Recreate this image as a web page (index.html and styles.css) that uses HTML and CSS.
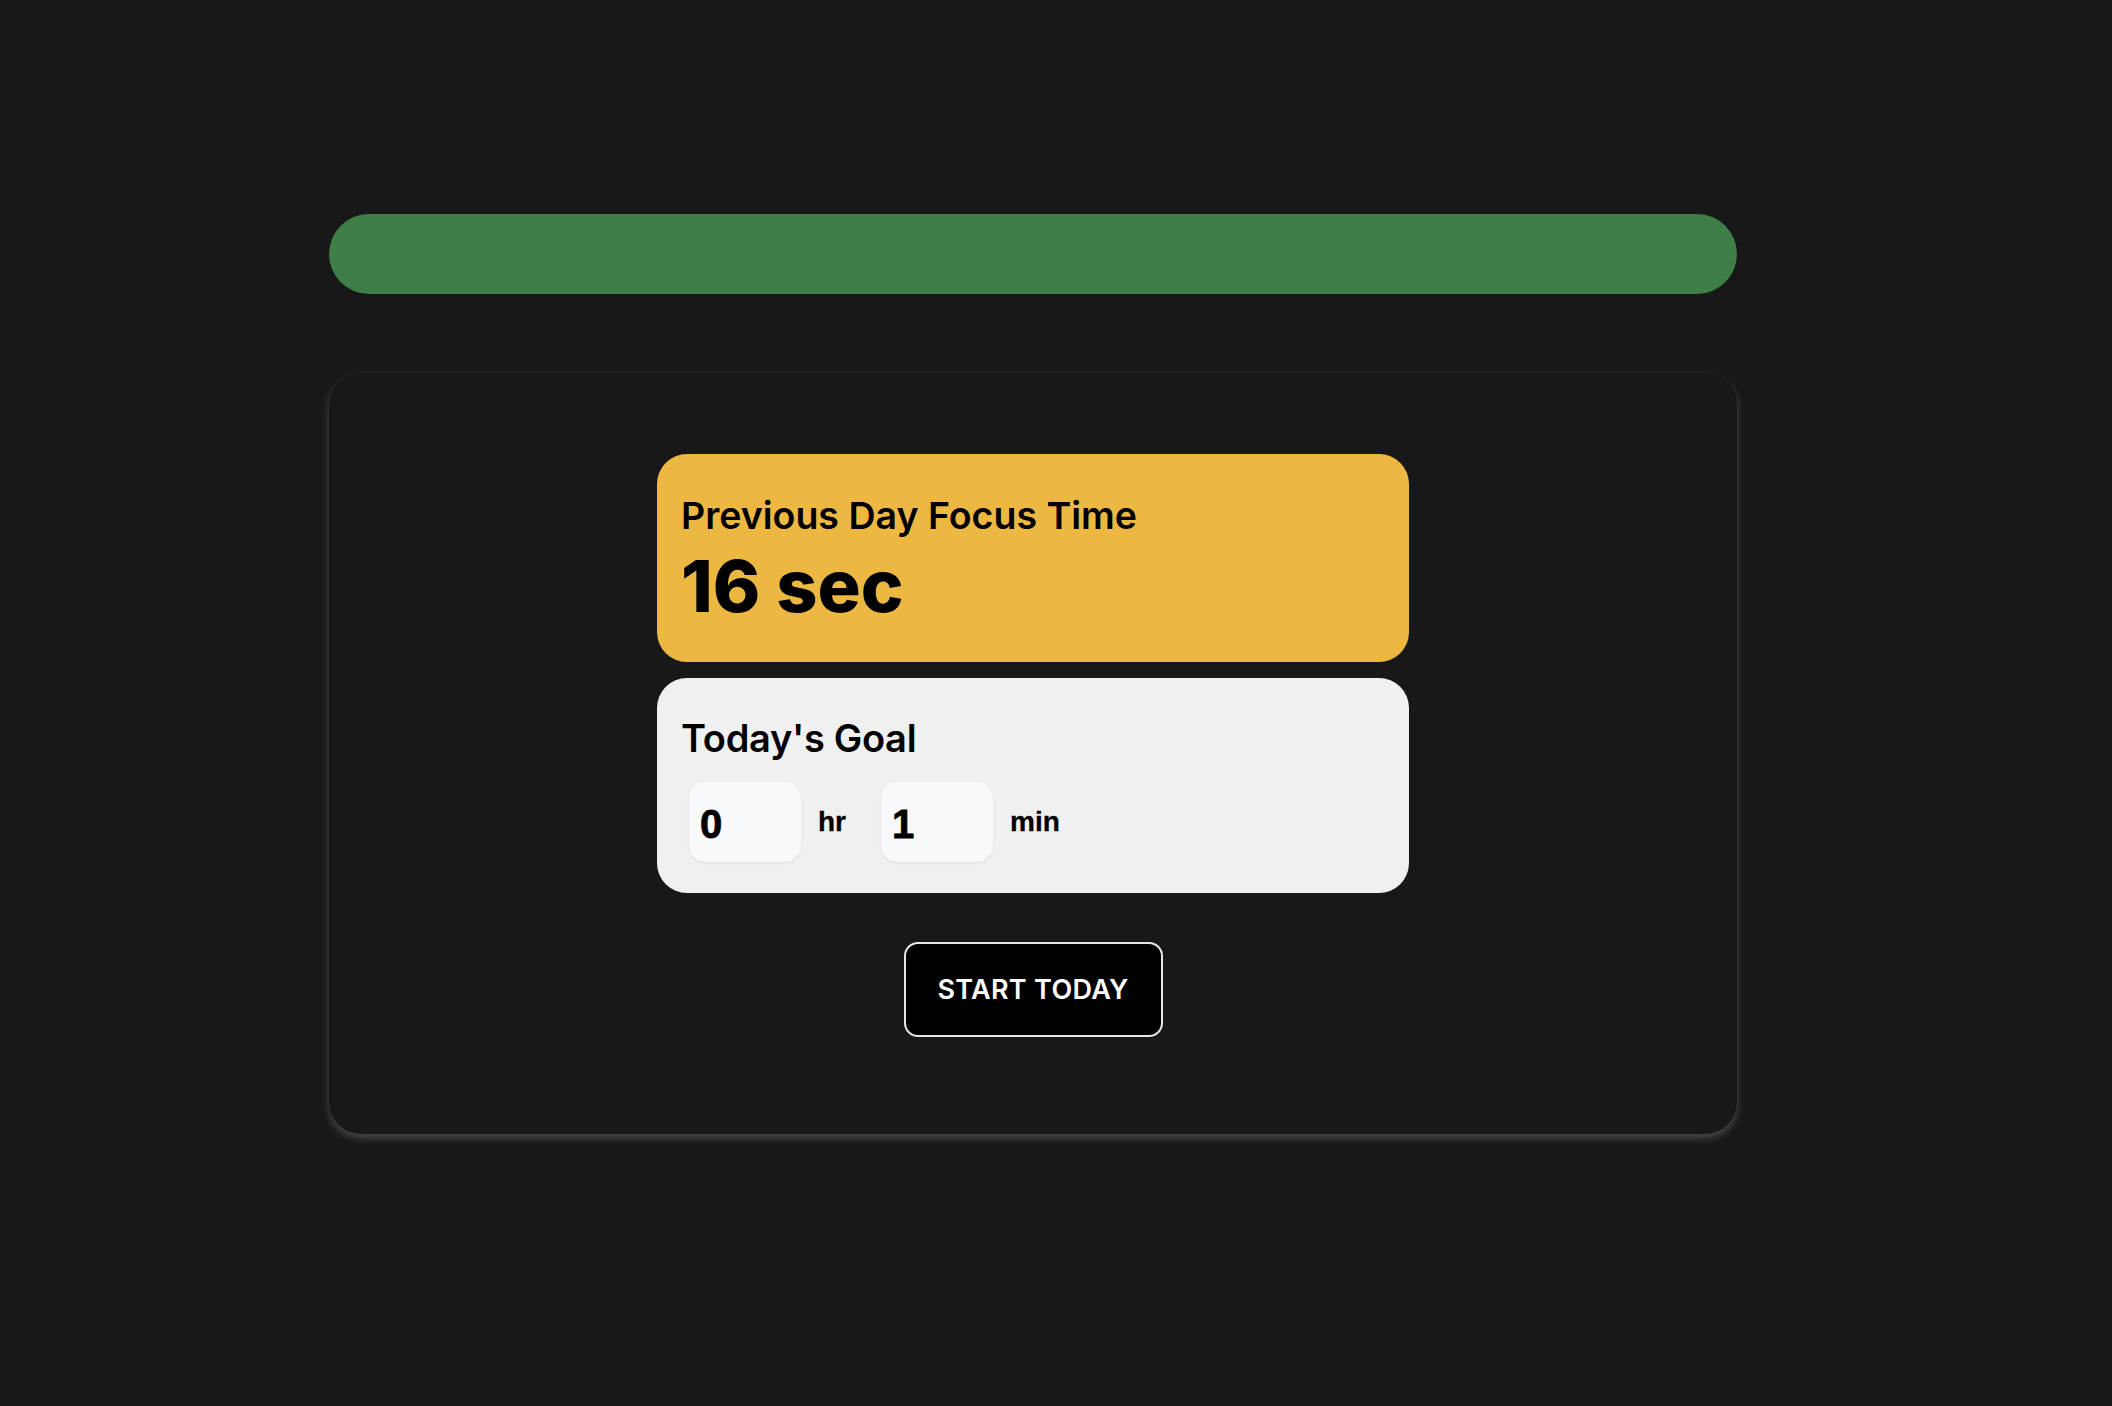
FILE: index.html
```html
<!DOCTYPE html>
<html lang="en">
<head>
<meta charset="utf-8">
<title>Focus</title>
<link rel="stylesheet" href="styles.css">
</head>
<body>
<main class="page">
  <div class="progress"></div>
  <section class="panel">
    <div class="stat-card">
      <h2 class="stat-title">Previous Day Focus Time</h2>
      <p class="stat-value">16 sec</p>
    </div>
    <div class="goal-card">
      <h2 class="goal-title">Today's Goal</h2>
      <div class="goal-row">
        <input class="goal-input" type="text" value="0">
        <span class="goal-unit unit-hr">hr</span>
        <input class="goal-input" type="text" value="1">
        <span class="goal-unit">min</span>
      </div>
    </div>
    <button class="start-btn" type="button">START TODAY</button>
  </section>
</main>
</body>
</html>
```
FILE: styles.css
```css
* { box-sizing: border-box; }
html, body { margin: 0; padding: 0; }
body {
  background: #181818;
  font-family: "Inter", "Noto Sans", sans-serif;
  min-height: 1406px;
}
.page {
  width: 1408px;
  margin-left: 329px;
  padding-top: 214px;
  display: flex;
  flex-direction: column;
}
.progress {
  height: 80px;
  border-radius: 40px;
  background: #3d7f46;
}
.panel {
  margin-top: 79px;
  height: 761px;
  border-radius: 32px;
  background: #181818;
  box-shadow: 0 4px 8px rgba(255, 255, 255, 0.22);
  display: flex;
  flex-direction: column;
  align-items: center;
  padding-top: 81px;
}
.stat-card {
  width: 752px;
  height: 208px;
  background: #ecb841;
  border-radius: 30px;
  padding: 40px 24px 0;
  color: #000;
}
.stat-title {
  margin: 0;
  font-size: 37.5px;
  font-weight: 600;
  line-height: 44px;
  letter-spacing: 0;
}
.stat-value {
  margin: 8px 0 0;
  font-size: 72px;
  font-weight: 800;
  line-height: 80px;
  letter-spacing: 0;
}
.goal-card {
  margin-top: 16px;
  width: 752px;
  height: 215px;
  background: #f0f0f0;
  border-radius: 30px;
  padding: 37px 24px 0;
  color: #000;
}
.goal-title {
  margin: 0;
  font-size: 38px;
  font-weight: 600;
  line-height: 46px;
  letter-spacing: -0.3px;
}
.goal-row {
  display: flex;
  align-items: center;
  margin-top: 21px;
}
.goal-input {
  width: 112px;
  height: 80px;
  margin-left: 8px;
  border: none;
  border-radius: 16px;
  background: #f8f9fa;
  box-shadow: 0 1px 3px rgba(0, 0, 0, 0.08);
  padding: 4px 11px 0;
  font-family: "Liberation Sans", Arial, sans-serif;
  font-weight: 700;
  font-size: 40px;
  -webkit-text-stroke: 0.8px #000;
  color: #000;
  outline: none;
}
.goal-unit {
  font-family: "Liberation Sans", Arial, sans-serif;
  font-weight: 700;
  font-size: 28px;
  -webkit-text-stroke: 0.3px #000;
  margin-left: 17px;
  margin-right: 27px;
  color: #000;
}
.start-btn {
  margin-top: 49px;
  width: 259px;
  height: 95px;
  background: #000;
  color: #fff;
  border: 2px solid #e6e6e6;
  border-radius: 14px;
  font-family: "Inter", "Noto Sans", sans-serif;
  font-size: 27px;
  font-weight: 600;
  letter-spacing: 0.3px;
  cursor: pointer;
}
```
